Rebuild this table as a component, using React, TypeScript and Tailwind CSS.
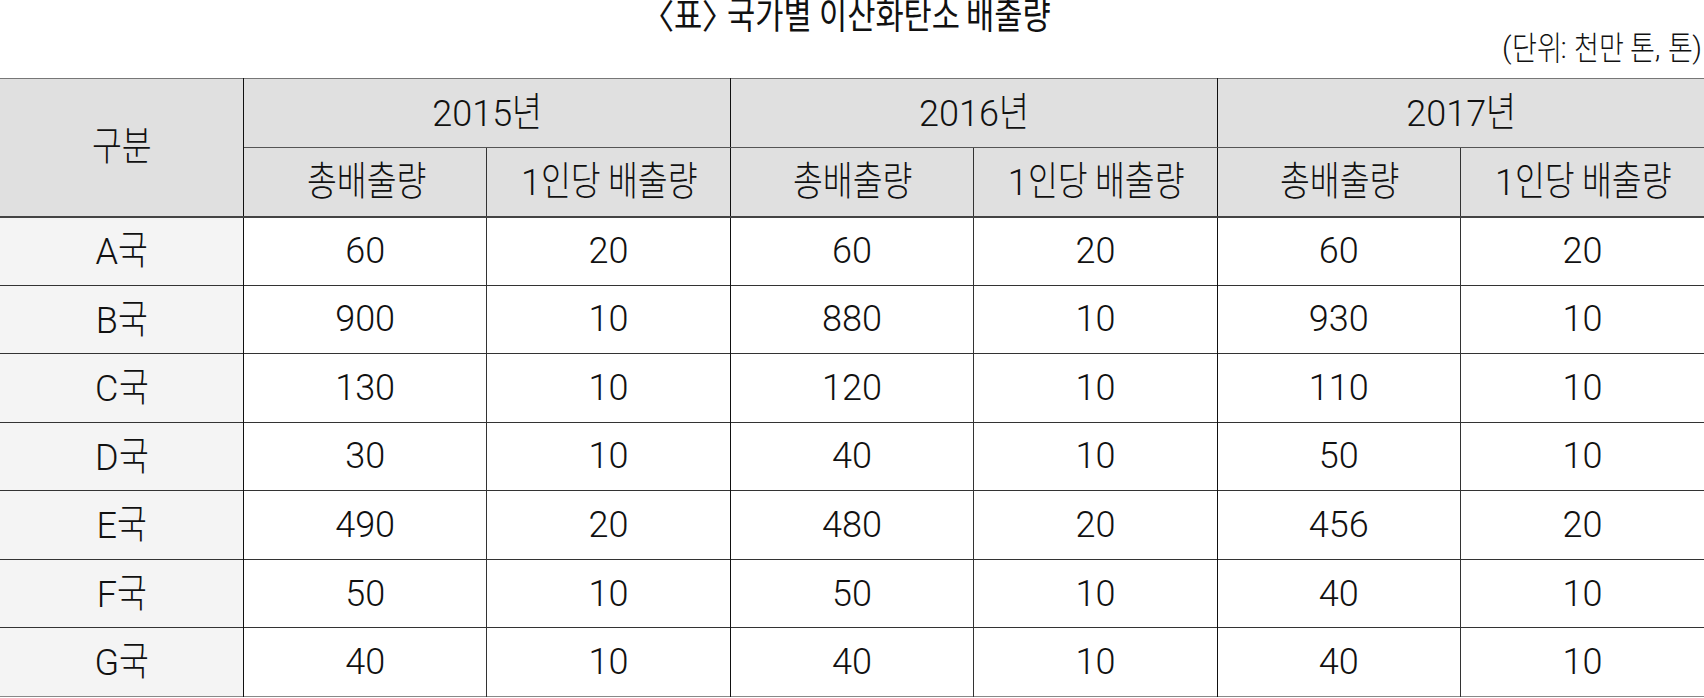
import React from "react";

function T({ s }: { s: string }) {
  const parts = s.split(/([\uAC00-\uD7A3]+|〈|〉)/).filter((p) => p.length > 0);
  return (
    <>
      {parts.map((p, i) => {
        if (p === "〈")
          return (
            <span key={i} className="inline-block -ml-[0.45em]">
              〈
            </span>
          );
        if (p === "〉")
          return (
            <span key={i} className="inline-block -mr-[0.5em]">
              〉
            </span>
          );
        if (/[\uAC00-\uD7A3]/.test(p))
          return (
            <span
              key={i}
              className="inline-block origin-left scale-x-[0.82] text-[1.1em]"
              style={{ marginRight: `${-0.18 * p.length}em` }}
            >
              {p}
            </span>
          );
        return (
          <span key={i} className="whitespace-pre">
            {p}
          </span>
        );
      })}
    </>
  );
}

const rows: [string, number[]][] = [
  ["A국", [60, 20, 60, 20, 60, 20]],
  ["B국", [900, 10, 880, 10, 930, 10]],
  ["C국", [130, 10, 120, 10, 110, 10]],
  ["D국", [30, 10, 40, 10, 50, 10]],
  ["E국", [490, 20, 480, 20, 456, 20]],
  ["F국", [50, 10, 50, 10, 40, 10]],
  ["G국", [40, 10, 40, 10, 40, 10]],
];

export default function App() {
  return (
    <div className="w-[1704px] h-[698px] bg-white text-[#111] font-['Roboto','Noto_Sans_CJK_KR',sans-serif] font-light overflow-hidden">
      <div className="h-[78px] flex flex-col">
        <div className="h-[34px] flex items-center justify-center text-[34px] leading-none font-normal">
          <T s="〈표〉 국가별 이산화탄소 배출량" />
        </div>
        <div className="h-[28px] flex items-center justify-end pr-[2px] text-[30px] leading-none">
          <T s="(단위: 천만 톤, 톤)" />
        </div>
      </div>
      <table className="w-full table-fixed border-collapse text-[36px] leading-none">
        <thead>
          <tr className="h-[69px] bg-[#e0e0e0] border-t border-[#777]">
            <th rowSpan={2} className="font-light border-b-2 border-b-[#444] border-r border-r-[#111]">
              <T s="구분" />
            </th>
            {["2015년", "2016년", "2017년"].map((y, i) => (
              <th
                key={y}
                colSpan={2}
                className={`font-light border-b border-b-[#555] ${i < 2 ? "border-r border-r-[#111]" : ""}`}
              >
                <T s={y} />
              </th>
            ))}
          </tr>
          <tr className="h-[69px] bg-[#e0e0e0]">
            {[0, 1, 2, 3, 4, 5].map((i) => (
              <th
                key={i}
                className={`font-light border-b-2 border-b-[#444] ${i < 5 ? (i % 2 === 0 ? "border-r border-r-[#333]" : "border-r border-r-[#111]") : ""}`}
              >
                <T s={i % 2 === 0 ? "총배출량" : "1인당 배출량"} />
              </th>
            ))}
          </tr>
        </thead>
        <tbody>
          {rows.map(([name, vals], ri) => (
            <tr
              key={name}
              className={`h-[68.57px] ${ri < rows.length - 1 ? "border-b border-[#333]" : "border-b border-[#888]"}`}
            >
              <td className="text-center bg-[#f4f4f4] border-r border-r-[#111]">
                <T s={name} />
              </td>
              {vals.map((v, i) => (
                <td
                  key={i}
                  className={`text-center ${i < 5 ? (i % 2 === 0 ? "border-r border-r-[#333]" : "border-r border-r-[#111]") : ""}`}
                >
                  {v}
                </td>
              ))}
            </tr>
          ))}
        </tbody>
      </table>
    </div>
  );
}
